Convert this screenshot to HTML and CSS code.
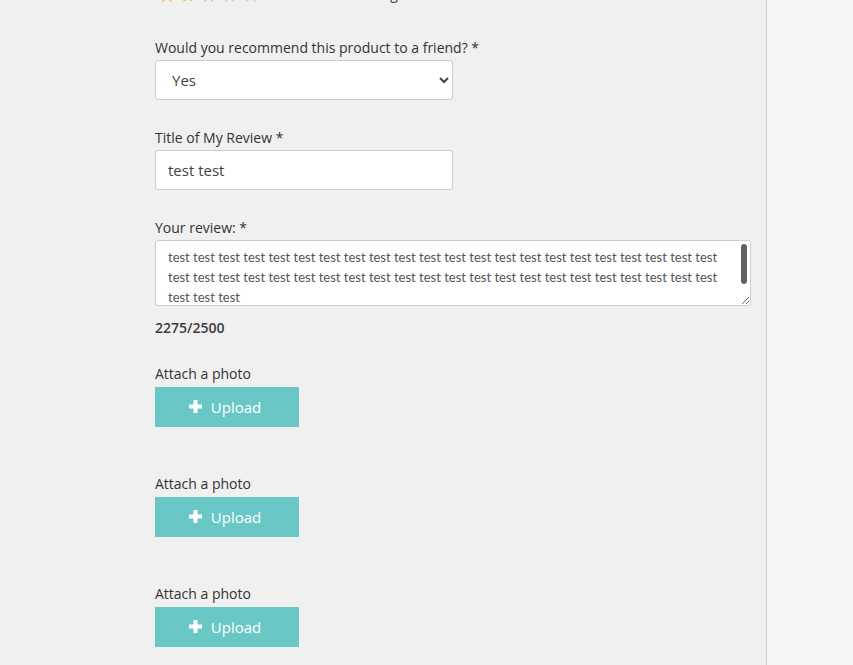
FILE: index.html
```html
<!DOCTYPE html>
<html>
<head>
<meta charset="utf-8">
<link rel="stylesheet" href="styles.css">
</head>
<body>
<div class="page">
  <main class="main">
    <div class="rating-row">
      <span class="stars"><span class="on">★★★</span><span class="off">★★</span></span>
      <span class="rating-text">rating</span>
    </div>

    <div class="field">
      <label class="label">Would you recommend this product to a friend? *</label>
      <select class="control select">
        <option>Yes</option>
        <option>No</option>
      </select>
    </div>

    <div class="field">
      <label class="label">Title of My Review *</label>
      <input class="control input" type="text" value="test test">
    </div>

    <div class="field">
      <label class="label">Your review: *</label>
      <div class="textarea-wrap">
        <textarea class="textarea">test test test test test test test test test test test test test test test test test test test test test test test test test test test test test test test test test test test test test test test test test test test test test test test</textarea>
        <span class="thumb"></span>
      </div>
      <div class="counter">2275/2500</div>
    </div>

    <div class="attach">
      <div class="label">Attach a photo</div>
      <button class="upload"><svg class="plus" width="13" height="13" viewBox="0 0 13 13"><rect x="4.5" y="0" width="4" height="13" fill="#fff"/><rect x="0" y="4.5" width="13" height="4" fill="#fff"/></svg><span>Upload</span></button>
    </div>
    <div class="attach">
      <div class="label">Attach a photo</div>
      <button class="upload"><svg class="plus" width="13" height="13" viewBox="0 0 13 13"><rect x="4.5" y="0" width="4" height="13" fill="#fff"/><rect x="0" y="4.5" width="13" height="4" fill="#fff"/></svg><span>Upload</span></button>
    </div>
    <div class="attach">
      <div class="label">Attach a photo</div>
      <button class="upload"><svg class="plus" width="13" height="13" viewBox="0 0 13 13"><rect x="4.5" y="0" width="4" height="13" fill="#fff"/><rect x="0" y="4.5" width="13" height="4" fill="#fff"/></svg><span>Upload</span></button>
    </div>
  </main>
  <aside class="sidebar"></aside>
</div>
</body>
</html>
```

FILE: styles.css
```css
html, body {
  margin: 0;
  padding: 0;
  height: 100%;
  overflow: hidden;
}
body {
  background: #f0f0f0;
  font-family: "Open Sans", "Noto Sans", sans-serif;
  color: #333;
}
.page {
  display: flex;
  height: 665px;
}
.main {
  width: 766px;
  box-sizing: border-box;
  padding-left: 155px;
  padding-right: 15px;
}
.sidebar {
  flex: 1;
  background: #f5f5f5;
  border-left: 1px solid #cfcfcf;
}
.rating-row {
  display: flex;
  align-items: flex-start;
  height: 3px;
  overflow: hidden;
  margin-bottom: 36px;
}
.stars {
  font-family: "DejaVu Sans", sans-serif;
  font-size: 20px;
  line-height: 20px;
  letter-spacing: 3px;
  margin-top: -15px;
  margin-left: 3px;
}
.stars .on { color: #f5b43c; }
.stars .off { color: #c8c8c8; }
.rating-text {
  font-size: 14px;
  line-height: 14px;
  margin-left: 97px;
  margin-top: -13px;
  color: #444;
}
.field {
  margin-bottom: 29px;
}
.label {
  display: block;
  font-size: 14px;
  line-height: 17px;
  color: #333;
  margin-bottom: 4px;
}
.control {
  display: block;
  width: 298px;
  height: 40px;
  box-sizing: border-box;
  border: 1px solid #cdcdcd;
  border-radius: 3px;
  background: #fff;
  font-family: "Open Sans", "Noto Sans", sans-serif;
  font-size: 15px;
  color: #444;
  outline: none;
}
.select {
  padding: 0 12px 0 12px;
}
.input {
  padding: 0 12px;
}
.textarea-wrap {
  position: relative;
  width: 596px;
}
.textarea {
  display: block;
  width: 596px;
  height: 66px;
  box-sizing: border-box;
  border: 1px solid #cdcdcd;
  border-radius: 3px;
  background: #fff;
  padding: 6px 24px 28px 12px;
  font-family: "Lato", "Noto Sans", sans-serif;
  font-size: 13px;
  line-height: 20px;
  color: #555;
  resize: vertical;
  overflow: hidden;
  outline: none;
}
.thumb {
  position: absolute;
  right: 4px;
  top: 4px;
  width: 6px;
  height: 40px;
  border-radius: 3px;
  background: #606060;
}
.counter {
  margin-top: 13px;
  font-size: 14px;
  font-weight: 600;
  color: #3c3c3c;
  line-height: 17px;
}
.attach {
  margin-top: 25px;
  height: 89px;
}
.attach + .attach {
  margin-top: 21px;
}
.upload {
  display: flex;
  align-items: center;
  justify-content: center;
  gap: 9px;
  width: 144px;
  height: 40px;
  border: none;
  border-radius: 0;
  background: #69c8c5;
  color: #fff;
  font-family: "Open Sans", "Noto Sans", sans-serif;
  font-size: 15px;
  padding: 0 4px 0 0;
  margin-top: 5px;
}
.plus {
  display: block;
  margin-top: -2px;
}
```
